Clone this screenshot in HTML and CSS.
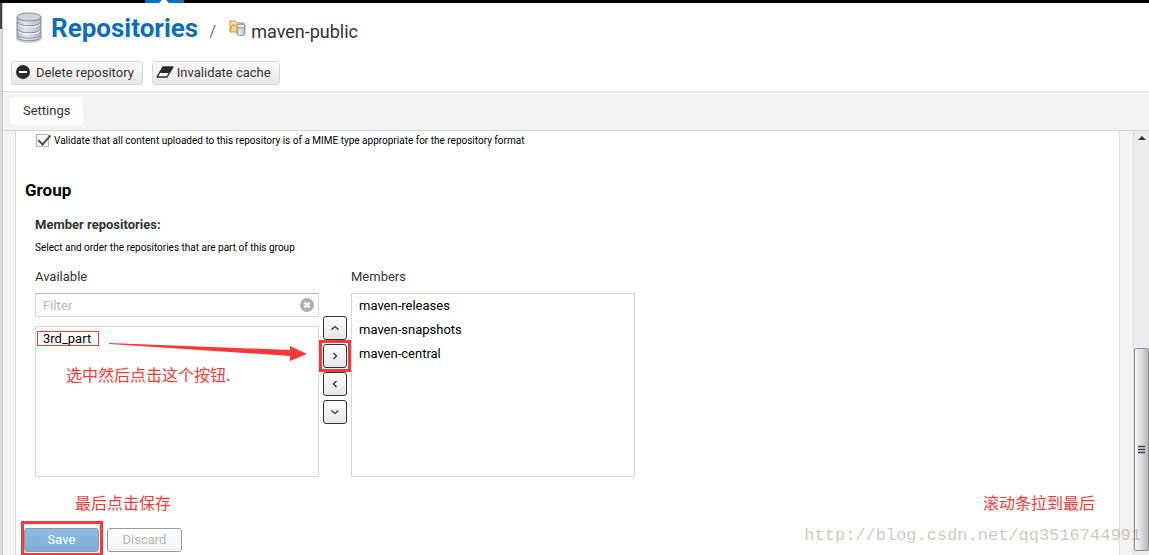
FILE: index.html
```
<!DOCTYPE html>
<html lang="en">

<head>
    <meta charset="utf-8">
    <title>Repositories</title>
    <link rel="stylesheet" href="styles.css">
</head>

<body>
    <!-- Top bar -->
    <div class="topbar">
        <svg class="topbar-active" width="39" height="3" viewBox="0 0 39 3">
            <rect width="39" height="3" fill="#0a6ebd"/>
            <path d="M14 3 L17 0 H21 L24 3 Z" fill="#fff"/>
        </svg>
    </div>

    <div class="page">
        <div class="side"></div>
        <main class="main">
            <!-- Header -->
            <header class="header">
                <div class="breadcrumb">
                    <svg class="icon-db" width="28" height="32" viewBox="0 0 28 32">
                        <defs>
                            <linearGradient id="metal">
                                <stop offset="0" stop-color="#b4bcc6"/>
                                <stop offset="0.35" stop-color="#e3e8ee"/>
                                <stop offset="1" stop-color="#b0b9c4"/>
                            </linearGradient>
                        </defs>
                        <ellipse cx="14" cy="27" rx="13" ry="4" fill="#d3d3d3"/>
                        <path d="M2 5 V25 C2 30 26 30 26 25 V5 Z" fill="url(#metal)" stroke="#858c94"/>
                        <ellipse cx="14" cy="5" rx="12" ry="4" fill="#ced5dd" stroke="#858c94"/>
                        <path d="M2 10 C2 15 26 15 26 10 M2 17 C2 22 26 22 26 17" fill="none" stroke="#858c94"/>
                        <path d="M3 12 C5 16 23 16 25 12 M3 19 C5 23 23 23 25 19" fill="none" stroke="#f8fafc"/>
                        <path d="M2 23 C4 27 24 27 26 23" fill="none" stroke="#98a1aa"/>
                    </svg>
                    <h1 class="title">Repositories</h1>
                    <span class="slash">/</span>
                    <svg class="icon-folder" width="18" height="18" viewBox="0 0 18 18">
                        <path d="M1 13 V2 H6 L8 4 H15 V7" fill="#fbe3a6" stroke="#d0913a"/>
                        <path d="M1 13 L3 6 H16 L14 13 Z" fill="#fcd77f" stroke="#d0913a"/>
                        <path d="M8 7 V15 C8 17 16 17 16 15 V7 Z" fill="url(#metal)" stroke="#8a939c"/>
                        <ellipse cx="12" cy="7" rx="4" ry="2" fill="#e4e9ef" stroke="#8a939c"/>
                    </svg>
                    <span class="repo-name">maven-public</span>
                </div>
                <div class="actions">
                    <button class="btn">
                        <svg width="14" height="14" viewBox="0 0 14 14">
                            <circle cx="7" cy="7" r="7" fill="#2b2b2b"/>
                            <rect x="3" y="6" width="8" height="2" fill="#fff"/>
                        </svg>
                        Delete repository
                    </button>
                    <button class="btn btn-cache">
                        <svg width="18" height="14" viewBox="0 0 18 14">
                            <path d="M7 2 H17 L11 12 H1 Z" fill="#fff" stroke="#2b2b2b" stroke-width="1.4" stroke-linejoin="round"/>
                            <path d="M7 2 H17 L13.5 8 H3.5 Z" fill="#2b2b2b"/>
                        </svg>
                        Invalidate cache
                    </button>
                </div>
            </header>

            <nav class="tabs">
                <a class="tab" href="#">Settings</a>
            </nav>

            <div class="content">
                <form class="panel">
                    <label class="check-row">
                        <input class="check" type="checkbox" checked>
                        Validate that all content uploaded to this repository is of a MIME type appropriate for the repository format
                    </label>

                    <h2 class="section-title">Group</h2>

                    <div class="field">
                        <h3 class="field-title">Member repositories:</h3>
                        <p class="help">Select and order the repositories that are part of this group</p>

                        <div class="picker">
                            <div class="picker-col">
                                <label class="col-title" for="filter">Available</label>
                                <div class="filter">
                                    <input id="filter" type="text" placeholder="Filter">
                                    <button class="clear" type="button" aria-label="Clear">
                                        <svg width="14" height="14" viewBox="0 0 14 14">
                                            <circle cx="7" cy="7" r="7" fill="#b0b0b0"/>
                                            <path d="M4.5 4.5 L9.5 9.5 M9.5 4.5 L4.5 9.5" stroke="#fff" stroke-width="2.4"/>
                                        </svg>
                                    </button>
                                </div>
                                <ul class="list list-available">
                                    <li><span class="marked">3rd_part</span></li>
                                </ul>
                                <svg class="arrow" width="200" height="22" viewBox="0 0 200 22">
                                    <path d="M1 2 V3 L182 15 V20 L199 13 L182 5 V9 Z" fill="#fb3838"/>
                                </svg>
                                <span class="note note-select" lang="zh">选中然后点击这个按钮.</span>
                            </div>
                            <div class="movers">
                                <button class="mover" type="button" aria-label="Up">
                                    <svg width="10" height="10" viewBox="0 0 10 10"><path d="M1.5 6.5 L5 3.5 L8.5 6.5"/></svg>
                                </button>
                                <button class="mover mover-marked" type="button" aria-label="Add">
                                    <svg width="10" height="10" viewBox="0 0 10 10"><path d="M3.5 2 L6.5 5 L3.5 8"/></svg>
                                </button>
                                <button class="mover" type="button" aria-label="Remove">
                                    <svg width="10" height="10" viewBox="0 0 10 10"><path d="M6.5 2 L3.5 5 L6.5 8"/></svg>
                                </button>
                                <button class="mover" type="button" aria-label="Down">
                                    <svg width="10" height="10" viewBox="0 0 10 10"><path d="M1.5 3.5 L5 6.5 L8.5 3.5"/></svg>
                                </button>
                            </div>
                            <div class="picker-col">
                                <span class="col-title">Members</span>
                                <ul class="list list-members">
                                    <li>maven-releases</li>
                                    <li>maven-snapshots</li>
                                    <li>maven-central</li>
                                </ul>
                            </div>
                        </div>
                    </div>

                    <div class="notes" lang="zh">
                        <span class="note">最后点击保存</span>
                        <span class="note">滚动条拉到最后</span>
                    </div>

                    <div class="form-buttons">
                        <button class="form-btn save" type="button">Save</button>
                        <button class="form-btn discard" type="button">Discard</button>
                    </div>
                </form>

                <!-- Scrollbar -->
                <div class="scrollbar">
                    <svg class="scroll-up" width="8" height="4" viewBox="0 0 8 4"><path d="M0 4 L4 0 L8 4 Z" fill="#333"/></svg>
                    <div class="thumb">
                        <svg width="7" height="9" viewBox="0 0 7 9"><path d="M0 1.5 H7 M0 4.5 H7 M0 7.5 H7" stroke="#444" stroke-width="1.6"/></svg>
                    </div>
                </div>
            </div>
        </main>
    </div>

    <span class="watermark">http://blog.csdn.net/qq3516744991</span>
</body>

</html>
```
FILE: styles.css
```
* {
    box-sizing: border-box;
}

body {
    margin: 0;
    height: 100vh;
    overflow: hidden;
    position: relative;
    display: flex;
    flex-direction: column;
    background-color: #fff;
    color: #000;
    font-family: Roboto, Arial, sans-serif;
    font-size: 13px;
}

h1, h2, h3, p, ul {
    margin: 0;
    padding: 0;
}

button, input {
    font-family: inherit;
    font-size: 13px;
}

svg {
    display: block;
    flex: none;
}

/* Top bar */
.topbar {
    flex: none;
    height: 3px;
    padding-left: 145px;
    background-color: #000;
}

.page {
    flex: 1;
    min-height: 0;
    display: flex;
}

.side {
    width: 3px;
    flex: none;
    border-right: 1px solid #c8c8c8;
    background: linear-gradient(#444 26px, #ddd 26px);
}

.main {
    flex: 1;
    min-width: 0;
    display: flex;
    flex-direction: column;
}

/* Header */
.header {
    padding: 8px 8px 6px;
    border-bottom: 1px solid #dcdcdc;
}

.breadcrumb {
    display: flex;
    align-items: center;
    height: 34px;
    padding-left: 4px;
}

.title {
    margin-left: 8px;
    color: #0a6ebd;
    font-size: 26px;
    line-height: 32px;
}

.slash {
    margin: 6px 13px 0 11px;
    color: #777;
    font-size: 17px;
}

.repo-name {
    margin: 7px 0 0 4px;
    color: #333;
    font-size: 18px;
}

.actions {
    display: flex;
    gap: 9px;
    margin-top: 16px;
}

.btn {
    display: flex;
    align-items: center;
    gap: 6px;
    height: 24px;
    padding: 0 8px 2px 4px;
    border: 1px solid #d8d8d8;
    border-radius: 3px;
    background: linear-gradient(#fbfbfb, #e8e8e8);
    color: #333;
}

.btn-cache {
    gap: 3px;
    padding-left: 3px;
}

/* Tabs */
.tabs {
    display: flex;
    padding: 5px 7px;
    border-bottom: 1px solid #d6d6d6;
    background-color: #f3f3f3;
}

.tab {
    padding: 0 13px;
    border-radius: 4px;
    background-color: #fff;
    color: #333;
    line-height: 28px;
    text-decoration: none;
}

/* Content */
.content {
    flex: 1;
    min-height: 0;
    display: flex;
    background-color: #f3f3f3;
}

.panel {
    flex: 1;
    margin: 0 13px 0 12px;
    border: solid #dcdcdc;
    border-width: 0 1px;
    background-color: #fff;
}

.check-row {
    display: flex;
    align-items: center;
    gap: 5px;
    height: 18px;
    padding-left: 20px;
    font-size: 10px;
}

.check {
    appearance: none;
    width: 13px;
    height: 13px;
    margin: 0;
    border: 1px solid #b5b5b5;
    background-color: #f6f6f6;
    position: relative;
}

.check:checked::after {
    content: "";
    position: absolute;
    left: 4px;
    top: -3px;
    width: 5px;
    height: 11px;
    border: solid #555;
    border-width: 0 2px 2px 0;
    transform: rotate(42deg);
}

.section-title {
    margin: 29px 0 0 9px;
    font-size: 17px;
    line-height: 24px;
}

.field {
    padding: 15px 0 0 19px;
}

.field-title {
    color: #333;
    font-size: 13px;
    line-height: 16px;
}

.help {
    margin-top: 7px;
    font-size: 10px;
    line-height: 16px;
}

/* Item picker */
.picker {
    display: flex;
    gap: 4px;
    margin-top: 13px;
}

.picker-col {
    position: relative;
    display: flex;
    flex-direction: column;
    width: 284px;
}

.col-title {
    margin-bottom: 8px;
    color: #333;
    line-height: 16px;
}

.filter {
    display: flex;
    align-items: center;
    height: 24px;
    margin-bottom: 9px;
    padding: 0 4px 0 7px;
    border: 1px solid #d8d8d8;
    border-top-color: #b5b5b5;
}

.filter input {
    flex: 1;
    min-width: 0;
    padding: 0;
    border: none;
    outline: none;
}

.filter input::placeholder {
    color: #b5b5b5;
}

.clear {
    padding: 0;
    border: none;
    background: none;
}

.list {
    border: 1px solid #d8d8d8;
    list-style: none;
    line-height: 24px;
}

.list-available {
    height: 151px;
    padding-left: 1px;
}

.list-members {
    height: 184px;
    padding-left: 7px;
}

.marked {
    display: inline-block;
    padding: 0 7px 0 5px;
    border: 1px solid #fb3838;
    line-height: 13px;
}

.movers {
    display: flex;
    flex-direction: column;
    gap: 4px;
    padding-top: 47px;
}

.mover {
    display: flex;
    align-items: center;
    justify-content: center;
    width: 24px;
    height: 24px;
    padding: 0;
    border: 1px solid #333;
    border-radius: 3px;
    background: linear-gradient(#fff, #e6e6e6);
}

.mover path {
    fill: none;
    stroke: #333;
    stroke-width: 1.3;
}

/* Red frames around the buttons to press */
.mover-marked,
.save {
    position: relative;
}

.mover-marked::before,
.save::before {
    content: "";
    position: absolute;
    inset: -5px;
    border: 3px solid #fb3838;
}

.save::before {
    inset: -8px -5px -5px -4px;
}

/* Red notes */
.note {
    color: #fb3838;
    font-family: "Noto Sans CJK SC", sans-serif;
    font-size: 16px;
    line-height: 24px;
}

.note-select {
    position: absolute;
    left: 31px;
    top: 93px;
}

.arrow {
    position: absolute;
    left: 73px;
    top: 72px;
}

.notes {
    display: flex;
    justify-content: space-between;
    margin-top: 13px;
    padding: 0 24px 0 59px;
}

.form-buttons {
    display: flex;
    gap: 8px;
    margin-top: 14px;
    padding-left: 8px;
}

.form-btn {
    width: 75px;
    height: 24px;
    padding: 0 0 1px;
    border: 1px solid #999;
    border-radius: 3px;
}

.save {
    background: linear-gradient(#8dbce2, #7faed4);
    color: #fff;
}

.discard {
    background: linear-gradient(#fff, #f3f3f3);
    color: #b5b5b5;
}

/* Scrollbar */
.scrollbar {
    display: flex;
    flex-direction: column;
    align-items: center;
    justify-content: space-between;
    width: 16px;
    padding: 5px 0 4px;
    border-left: 1px solid #dcdcdc;
    background-color: #ececec;
}

.thumb {
    display: flex;
    align-items: center;
    justify-content: center;
    width: 15px;
    height: 49%;
    border: 1px solid #8e8e8e;
    border-radius: 2px;
    background: linear-gradient(to right, #f6f6f6, #dcdce0 50%, #b8b8bc);
}

.watermark {
    position: absolute;
    right: 8px;
    bottom: 7px;
    color: rgba(150, 150, 135, 0.5);
    font-family: "Liberation Mono", monospace;
    font-size: 17px;
    line-height: 24px;
}
```
